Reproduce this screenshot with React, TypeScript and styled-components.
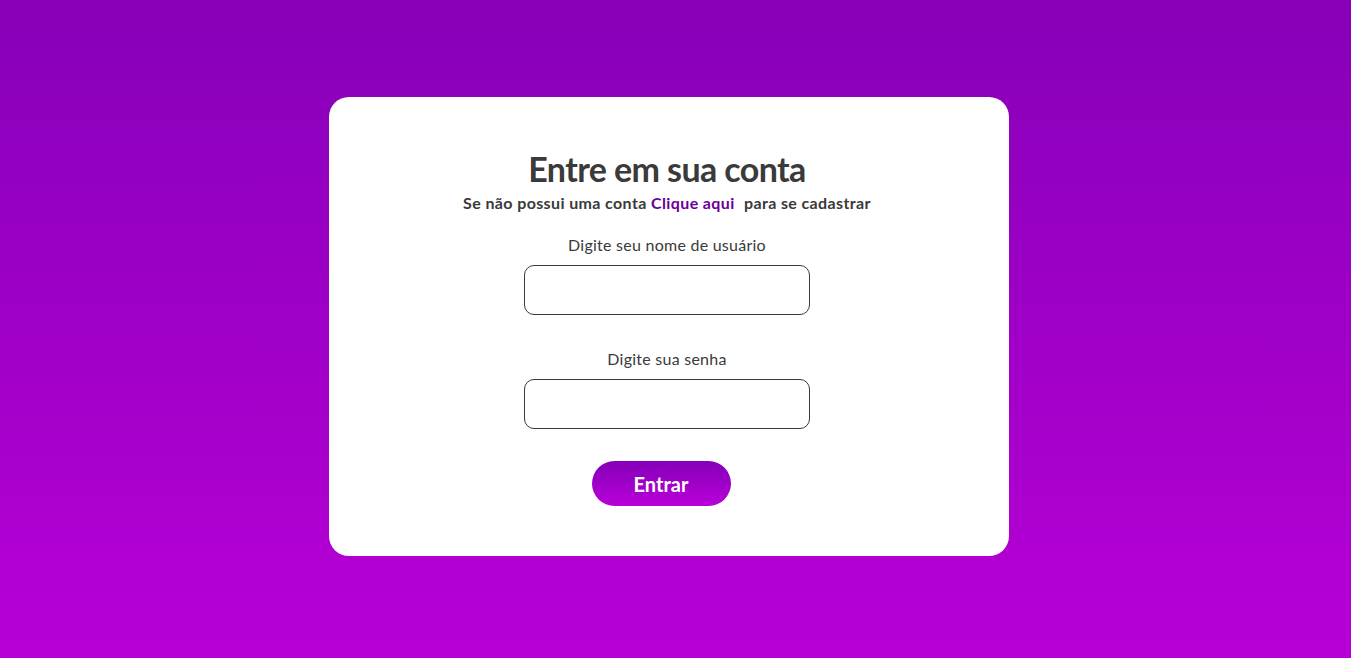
import React from "react";
import styled, { createGlobalStyle } from "styled-components";

const Global = createGlobalStyle`
  html, body { margin: 0; padding: 0; }
  body { font-family: "Lato", "Noto Sans", sans-serif; }
  * { box-sizing: border-box; }
`;

const Page = styled.main`
  min-height: 658px;
  background: linear-gradient(180deg, #8700b8 0%, #b700d6 100%);
  display: flex;
  align-items: flex-start;
  justify-content: center;
  padding: 97px 13px 0 0;
`;

const Card = styled.section`
  width: 680px;
  height: 459px;
  background: #ffffff;
  border-radius: 20px;
  display: flex;
  flex-direction: column;
  align-items: center;
  padding: 50px 4px 0 0;
  color: #3a3a3a;
`;

const Title = styled.h1`
  margin: 0;
  font-size: 34px;
  font-weight: 700;
  line-height: 44px;
  letter-spacing: -0.6px;
`;

const Subtitle = styled.p`
  margin: 2px 0 0 0;
  font-size: 16px;
  font-weight: 700;
  line-height: 20px;
  letter-spacing: 0.38px;
`;

const Link = styled.a`
  color: #6a0096;
  text-decoration: none;
  margin-right: 5px;
`;

const Field = styled.div`
  display: flex;
  flex-direction: column;
  align-items: center;
  margin-top: ${(p: { $top: number }) => p.$top}px;
`;

const Label = styled.label`
  font-size: 16px;
  font-weight: 400;
  line-height: 20px;
  letter-spacing: 0.25px;
  margin-bottom: 10px;
`;

const Input = styled.input`
  width: 286px;
  height: 50px;
  border: 1px solid #3a3a3a;
  border-radius: 10px;
  outline: none;
  font-size: 16px;
  padding: 0 12px;
  background: #fff;
`;

const Button = styled.button`
  margin-top: 32px;
  width: 139px;
  height: 45px;
  border: none;
  border-radius: 23px;
  background: linear-gradient(180deg, #8500b8 0%, #b800d8 100%);
  color: #ffffff;
  font-family: "Lato", "Noto Sans", sans-serif;
  font-size: 20px;
  font-weight: 700;
  cursor: pointer;
  transform: translateX(-6px);
`;

export default function App() {
  return (
    <>
      <Global />
      <Page>
        <Card>
          <Title>Entre em sua conta</Title>
          <Subtitle>
            Se não possui uma conta <Link href="#">Clique aqui</Link> para se cadastrar
          </Subtitle>
          <Field $top={22}>
            <Label>Digite seu nome de usuário</Label>
            <Input type="text" />
          </Field>
          <Field $top={34}>
            <Label>Digite sua senha</Label>
            <Input type="password" />
          </Field>
          <Button>Entrar</Button>
        </Card>
      </Page>
    </>
  );
}
